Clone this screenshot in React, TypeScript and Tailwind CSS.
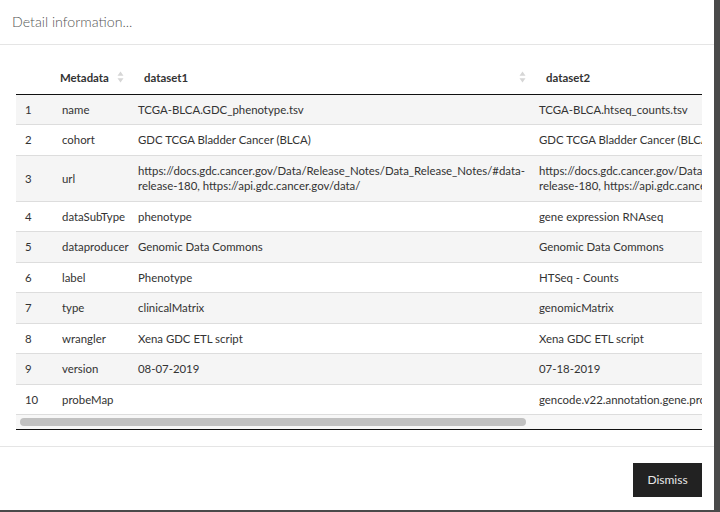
const rows: [string, string, string][] = [
  ["name", "TCGA-BLCA.GDC_phenotype.tsv", "TCGA-BLCA.htseq_counts.tsv"],
  ["cohort", "GDC TCGA Bladder Cancer (BLCA)", "GDC TCGA Bladder Cancer (BLCA)"],
  [
    "url",
    "https://docs.gdc.cancer.gov/Data/Release_Notes/Data_Release_Notes/#data-release-180, https://api.gdc.cancer.gov/data/",
    "https://docs.gdc.cancer.gov/Data/Release_Notes/Data_Release_Notes/#data-release-180, https://api.gdc.cancer.gov/data/",
  ],
  ["dataSubType", "phenotype", "gene expression RNAseq"],
  ["dataproducer", "Genomic Data Commons", "Genomic Data Commons"],
  ["label", "Phenotype", "HTSeq - Counts"],
  ["type", "clinicalMatrix", "genomicMatrix"],
  ["wrangler", "Xena GDC ETL script", "Xena GDC ETL script"],
  ["version", "08-07-2019", "07-18-2019"],
  ["probeMap", "", "gencode.v22.annotation.gene.probeMap"],
];

function SortIcon() {
  return (
    <svg width="7" height="12" viewBox="0 0 7 12" className="shrink-0">
      <path d="M3.5 0.5 L6.5 4.8 L0.5 4.8 Z" fill="#d6d6d6" />
      <path d="M3.5 11.5 L6.5 7.2 L0.5 7.2 Z" fill="#d6d6d6" />
    </svg>
  );
}

export default function App() {
  return (
    <div
      className="w-[720px] h-[512px] bg-[#4a4a4a] overflow-hidden text-[#333]"
      style={{ fontFamily: "Lato, 'Open Sans', sans-serif" }}
    >
      <div className="w-[714px] h-[510px] bg-white flex flex-col">
        <div className="h-[45px] border-b border-[#e5e5e5] flex items-center px-3">
          <span className="text-[14.2px] font-light text-[#555]">Detail information...</span>
        </div>

        <div className="pl-4 pt-4 pb-4 border-b border-[#e5e5e5]">
          <div className="w-[686px] overflow-hidden border-b border-[#111]">
            <table className="table-fixed border-collapse w-[914px] text-[11.4px]">
              <colgroup>
                <col className="w-[36px]" />
                <col className="w-[76px]" />
                <col className="w-[401px]" />
                <col className="w-[401px]" />
              </colgroup>
              <thead>
                <tr className="h-[33px] border-b border-[#111]">
                  <th></th>
                  <th className="pl-2 pr-[4px] font-bold text-left">
                    <div className="flex items-center justify-between">
                      <span>Metadata</span>
                      <SortIcon />
                    </div>
                  </th>
                  <th className="pl-4 pr-[3px] font-bold text-left">
                    <div className="flex items-center justify-between">
                      <span>dataset1</span>
                      <SortIcon />
                    </div>
                  </th>
                  <th className="pl-[17px] pr-2 font-bold text-left">
                    <div className="flex items-center justify-between">
                      <span>dataset2</span>
                      <SortIcon />
                    </div>
                  </th>
                </tr>
              </thead>
              <tbody>
                {rows.map((r, i) => (
                  <tr
                    key={r[0]}
                    className={
                      (i % 2 === 0 ? "bg-[#f5f5f5]" : "bg-white") +
                      " border-b border-[#dddddd] align-middle leading-[15px]"
                    }
                  >
                    <td className="pl-[9px] py-[7px]">{i + 1}</td>
                    <td className="pl-[10px] py-[7px] whitespace-nowrap">{r[0]}</td>
                    <td className="pl-[10px] pr-[6px] py-[7px] leading-[15.5px]">{r[1]}</td>
                    <td className="pl-[10px] pr-[6px] py-[7px] leading-[15.5px]">{r[2]}</td>
                  </tr>
                ))}
              </tbody>
            </table>
            <div className="h-[14px] bg-[#f7f7f7] flex items-center px-1">
              <div className="w-[506px] h-[8px] rounded-full bg-[#c1c1c1]" />
            </div>
          </div>
        </div>

        <div className="flex-1 flex justify-end items-start pt-4 pr-3">
          <button className="w-[69px] h-[34px] bg-[#222] text-[#e8e8e8] text-[12px]">Dismiss</button>
        </div>
      </div>
    </div>
  );
}
